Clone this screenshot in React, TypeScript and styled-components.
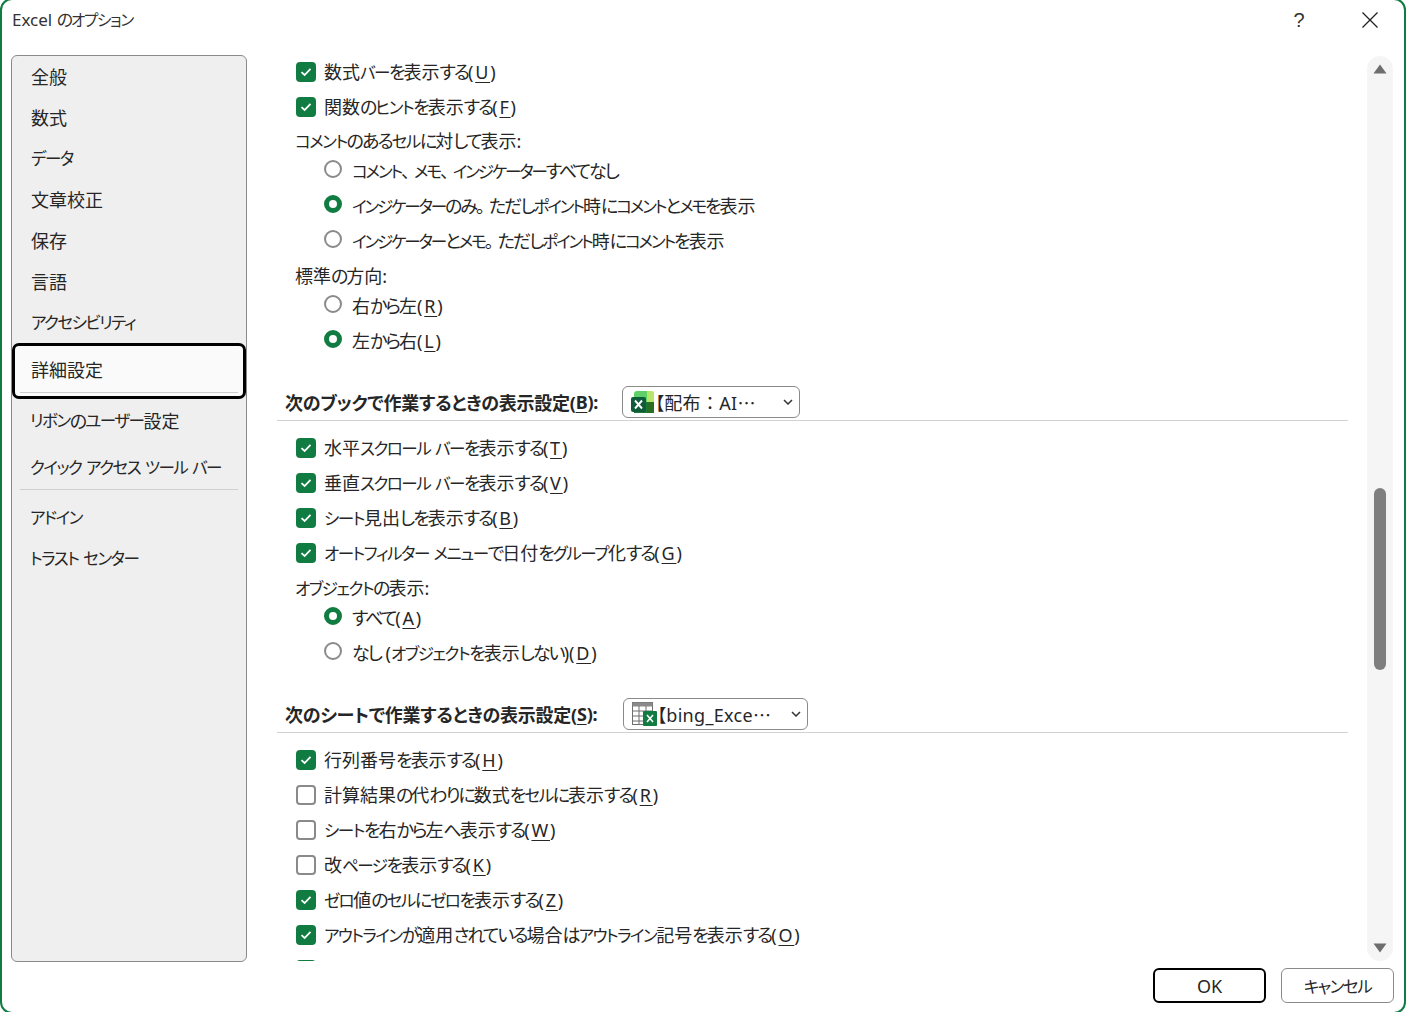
import styled, { createGlobalStyle } from "styled-components";
import { ReactNode } from "react";

const GlobalStyle = createGlobalStyle`
  html, body {
    margin: 0;
    padding: 0;
    height: 100%;
    overflow: hidden;
    background: #ffffff;
  }
  * {
    box-sizing: border-box;
  }
`;

const FONT = `"Noto Sans", "Noto Sans CJK JP", sans-serif`;

const Window = styled.div`
  width: 1406px;
  height: 1016px;
  margin-top: -2px;
  border: 2px solid #107c41;
  border-radius: 12px;
  background: #ffffff;
  display: flex;
  flex-direction: column;
  color: #262626;
  font-family: ${FONT};
  font-size: 18px;
  font-feature-settings: "palt";
  overflow: hidden;
`;

const TitleBar = styled.div`
  height: 55px;
  flex: none;
  display: flex;
  padding: 0 0 15px 10px;
  align-items: center;
`;

const Title = styled.div`
  flex: 1;
  font-size: 17px;
  margin-top: -4px;
  color: #333333;
`;

const HelpButton = styled.div`
  width: 70px;
  margin-left: 1px;
  text-align: center;
  font-family: "Liberation Sans", sans-serif;
  font-size: 20px;
  color: #333333;
`;

const CloseButton = styled.div`
  width: 70px;
  display: flex;
  justify-content: center;
  padding-left: 2px;
`;

const Body = styled.div`
  height: 907px;
  flex: none;
  display: flex;
  padding-left: 9px;
`;

const Sidebar = styled.nav`
  width: 236px;
  flex: none;
  background: #efefef;
  border: 1px solid #8a8a8a;
  border-radius: 6px;
  display: flex;
  flex-direction: column;
`;

const NavItem = styled.div<{ $h?: number; $x?: number; $low?: boolean }>`
  height: ${(p) => p.$h ?? 41}px;
  flex: none;
  display: flex;
  align-items: center;
  white-space: pre;
  padding-left: ${(p) => p.$x ?? 19}px;
  padding-top: ${(p) => (p.$low ? 3 : 0)}px;
  padding-bottom: ${(p) => (p.$low ? 0 : 2)}px;
`;

const NavSelected = styled.div`
  height: 56px;
  flex: none;
  background: #fafafa;
  border: 3px solid #000000;
  border-radius: 7px;
  padding: 0 5px 0 16px;
  display: flex;
  flex-direction: column;
`;

const NavSelectedText = styled.div`
  height: 46px;
  display: flex;
  align-items: center;
  flex: none;
`;

const NavRule = styled.div`
  height: 1px;
  flex: none;
  background: #d0d0d0;
  margin: 0 8px 7px;
`;

const NavSelectedRule = styled.div`
  height: 1px;
  background: #cccccc;
  margin-left: -11px;
  flex: none;
`;

const Content = styled.div`
  width: 1071px;
  height: 906px;
  flex: none;
  margin-left: 30px;
  overflow: hidden;
`;

const Row = styled.div<{ $radio?: boolean; $tight?: boolean }>`
  height: 35px;
  display: flex;
  align-items: center;
  white-space: pre;
  padding-left: ${(p) => (p.$radio ? 47 : 19)}px;
  --kata: ${(p) => (p.$tight ? "-0.13em" : "-0.09em")};
`;

const RowText = styled.span`
  margin-top: -4px;
`;

const RadioText = styled.span`
  margin-top: -2px;
`;

const GroupLabel = styled.div<{ $h: number }>`
  height: ${(p) => p.$h}px;
  display: flex;
  align-items: flex-end;
  padding-left: 18px;
  line-height: 23px;
`;

const CheckBox = styled.span<{ $on: boolean }>`
  width: 20px;
  height: 20px;
  flex: none;
  margin-right: 8px;
  margin-top: -2px;
  border-radius: 4px;
  background: ${(p) => (p.$on ? "#107c41" : "#ffffff")};
  border: ${(p) => (p.$on ? "none" : "2px solid #8a8a8a")};
  display: flex;
  align-items: center;
  justify-content: center;
`;

const RadioDot = styled.span<{ $on: boolean }>`
  width: 18px;
  height: 18px;
  flex: none;
  margin-right: 10px;
  margin-top: -3px;
  border-radius: 50%;
  background: #ffffff;
  border: ${(p) => (p.$on ? "5px solid #107c41" : "2px solid #8a8a8a")};
`;

const SectionHeader = styled.div`
  height: 35px;
  margin-top: 28px;
  margin-bottom: 10px;
  border-bottom: 1px solid #d2d2d2;
  display: flex;
  align-items: flex-start;
  padding-left: 8px;
`;

const SectionTitle = styled.div<{ $w: number }>`
  font-weight: 700;
  height: 32px;
  display: flex;
  align-items: center;
  letter-spacing: -0.25px;
  width: ${(p) => p.$w}px;
  flex: none;
`;

const Select = styled.div<{ $w: number }>`
  width: ${(p) => p.$w}px;
  height: 32px;
  border: 1px solid #8a8a8a;
  border-radius: 6px;
  display: flex;
  align-items: center;
  padding: 0 6px 0 8px;
`;

const SelectText = styled.span`
  flex: 1;
  white-space: nowrap;
  letter-spacing: 0.3px;
`;

const WideColon = styled.span`
  font-feature-settings: normal;
`;

const Dots = styled.span.attrs({ lang: "ja" })`
  font-family: "Noto Sans CJK JP", sans-serif;
  font-feature-settings: normal;
  letter-spacing: -1px;
`;

const Scrollbar = styled.div`
  width: 26px;
  height: 905px;
  margin-left: 19px;
  margin-top: 1px;
  flex: none;
  background: #f5f5f5;
  border-radius: 13px;
  display: flex;
  flex-direction: column;
  align-items: center;
`;

const ArrowSlot = styled.div`
  height: 26px;
  flex: none;
  display: flex;
  align-items: center;
  justify-content: center;
`;

const ThumbArea = styled.div`
  flex: 1;
  width: 100%;
  display: flex;
  justify-content: center;
  padding-top: 406px;
`;

const Thumb = styled.div`
  width: 12px;
  height: 182px;
  border-radius: 6px;
  background: #7f7f7f;
`;

const Footer = styled.div`
  height: 50px;
  flex: none;
  display: flex;
  justify-content: flex-end;
  gap: 15px;
  padding: 6px 10px 0 0;
`;

const Button = styled.div<{ $primary?: boolean }>`
  width: 113px;
  height: 35px;
  border-radius: 6px;
  border: ${(p) => (p.$primary ? "2px solid #000000" : "1px solid #8a8a8a")};
  display: flex;
  align-items: center;
  justify-content: center;
`;

const Key = styled.span`
  text-decoration: underline;
  text-underline-offset: 3px;
  text-decoration-thickness: 1px;
`;

const Parens = styled.span`
  letter-spacing: 1.8px;
`;

// the original font sets kana much tighter than kanji
const Kata = styled.span`
  font-size: 0.92em;
  letter-spacing: var(--kata, -0.09em);
`;

const Hira = styled.span`
  letter-spacing: -2px;
`;

const Punct = styled.span`
  font-feature-settings: normal;
  letter-spacing: -5px;
`;

const Jp = ({ text }: { text: string }) => (
  <>
    {(text.match(/[\u30A0-\u30FF]+|[\u3040-\u309F]+|[、。]+|[^\u30A0-\u30FF\u3040-\u309F、。]+/g) ?? []).map((run, i) => {
      if (/[\u30A0-\u30FF]/.test(run)) return <Kata key={i}>{run}</Kata>;
      if (/[\u3040-\u309F]/.test(run)) return <Hira key={i}>{run}</Hira>;
      if (/[、。]/.test(run)) return <Punct key={i}>{run}</Punct>;
      return <span key={i}>{run}</span>;
    })}
  </>
);

const Accel = ({ text, k }: { text: string; k?: string }): ReactNode => (
  <>
    <Jp text={text} />
    {k && (
      <Parens>
        (<Key>{k}</Key>)
      </Parens>
    )}
  </>
);

const Check = ({ on, text, k }: { on: boolean; text?: string; k?: string }) => (
  <Row>
    <CheckBox $on={on}>
      {on && (
        <svg width="12" height="10" viewBox="0 0 12 10" fill="none">
          <path d="M1.5 5.2 4.6 8 10.5 1.8" stroke="#fff" strokeWidth="1.8" />
        </svg>
      )}
    </CheckBox>
    {text && (
      <RowText>
        <Accel text={text} k={k} />
      </RowText>
    )}
  </Row>
);

const Radio = ({ on, text, k, tight }: { on: boolean; text: string; k?: string; tight?: boolean }) => (
  <Row $radio $tight={tight}>
    <RadioDot $on={on} />
    <RadioText>
      <Accel text={text} k={k} />
    </RadioText>
  </Row>
);

const BookIcon = () => (
  <svg width="24" height="24" viewBox="0 0 24 24" style={{ flex: "none" }}>
    <path d="M8 1h8v11H3V4a3 3 0 0 1 3-3z" fill="#5fd068" />
    <path d="M16 1h5a2 2 0 0 1 2 2v9h-7z" fill="#b5e66a" />
    <rect x="3" y="12" width="20" height="11" fill="#1e7a34" />
    <path d="M16 12h7v9a2 2 0 0 1-2 2h-5z" fill="#2a6e22" />
    <rect x="0" y="7" width="15" height="15" rx="2" fill="#0f5c3a" />
    <path d="M4 10.5l7 8M11 10.5l-7 8" stroke="#fff" strokeWidth="1.9" />
  </svg>
);

const SheetIcon = () => (
  <svg width="25" height="25" viewBox="0 0 25 25" style={{ flex: "none" }}>
    <rect x="0.5" y="0.5" width="20" height="22" fill="#fff" stroke="#6e6e6e" />
    <rect x="0.5" y="0.5" width="20" height="4" fill="#8a8a8a" />
    <path d="M0 9h21M0 14h21M0 19h21M7 4v19M14 4v19" stroke="#6e6e6e" />
    <rect x="11" y="9" width="14" height="15" rx="1" fill="#107c41" />
    <path d="M15 13l6 7M21 13l-6 7" stroke="#fff" strokeWidth="1.6" />
  </svg>
);

const Chevron = () => (
  <svg width="10" height="6" viewBox="0 0 10 6" fill="none" style={{ flex: "none" }}>
    <path d="M1 1l4 4 4-4" stroke="#333" strokeWidth="1.5" />
  </svg>
);

function App() {
  return (
    <>
      <GlobalStyle />
      <Window>
        <TitleBar>
          <Title><Jp text="Excel のオプション" /></Title>
          <HelpButton>?</HelpButton>
          <CloseButton>
            <svg width="16" height="16" viewBox="0 0 16 16" fill="none">
              <path d="M.5.5l15 15M15.5.5l-15 15" stroke="#222" strokeWidth="1.3" />
            </svg>
          </CloseButton>
        </TitleBar>
        <Body>
          <Sidebar>
            <NavItem><Jp text="全般" /></NavItem>
            <NavItem><Jp text="数式" /></NavItem>
            <NavItem><Jp text="データ" /></NavItem>
            <NavItem><Jp text="文章校正" /></NavItem>
            <NavItem><Jp text="保存" /></NavItem>
            <NavItem><Jp text="言語" /></NavItem>
            <NavItem><Jp text="アクセシビリティ" /></NavItem>
            <NavSelected>
              <NavSelectedText><Jp text="詳細設定" /></NavSelectedText>
              <NavSelectedRule />
            </NavSelected>
            <NavItem $h={43} $x={18}><Jp text="リボンのユーザー設定" /></NavItem>
            <NavItem $h={47} $x={18} $low><Jp text="クイック アクセス ツール バー" /></NavItem>
            <NavRule />
            <NavItem $x={18}><Jp text="アドイン" /></NavItem>
            <NavItem $x={18}><Jp text="トラスト センター" /></NavItem>
          </Sidebar>
          <Content>
            <Check on text="数式バーを表示する" k="U" />
            <Check on text="関数のヒントを表示する" k="F" />
            <GroupLabel $h={28}><Jp text="コメントのあるセルに対して表示:" /></GroupLabel>
            <Radio on={false} tight text="コメント、メモ、インジケーターすべてなし" />
            <Radio on tight text="インジケーターのみ。ただしポイント時にコメントとメモを表示" />
            <Radio on={false} tight text="インジケーターとメモ。ただしポイント時にコメントを表示" />
            <GroupLabel $h={30}><Jp text="標準の方向:" /></GroupLabel>
            <Radio on={false} text="右から左" k="R" />
            <Radio on text="左から右" k="L" />
            <SectionHeader>
              <SectionTitle $w={337}>次のブックで作業するときの表示設定(<Key>B</Key>):</SectionTitle>
              <Select $w={178}>
                <BookIcon />
                <SelectText>【配布<WideColon>：</WideColon>AI<Dots>…</Dots></SelectText>
                <Chevron />
              </Select>
            </SectionHeader>
            <Check on text="水平スクロール バーを表示する" k="T" />
            <Check on text="垂直スクロール バーを表示する" k="V" />
            <Check on text="シート見出しを表示する" k="B" />
            <Check on text="オートフィルター メニューで日付をグループ化する" k="G" />
            <GroupLabel $h={29}><Jp text="オブジェクトの表示:" /></GroupLabel>
            <Radio on text="すべて" k="A" />
            <Radio on={false} text="なし (オブジェクトを表示しない)" k="D" />
            <SectionHeader>
              <SectionTitle $w={338}>次のシートで作業するときの表示設定(<Key>S</Key>):</SectionTitle>
              <Select $w={185}>
                <SheetIcon />
                <SelectText>【bing_Exce<Dots>…</Dots></SelectText>
                <Chevron />
              </Select>
            </SectionHeader>
            <Check on text="行列番号を表示する" k="H" />
            <Check on={false} text="計算結果の代わりに数式をセルに表示する" k="R" />
            <Check on={false} text="シートを右から左へ表示する" k="W" />
            <Check on={false} text="改ページを表示する" k="K" />
            <Check on text="ゼロ値のセルにゼロを表示する" k="Z" />
            <Check on text="アウトラインが適用されている場合はアウトライン記号を表示する" k="O" />
            <Check on />
          </Content>
          <Scrollbar>
            <ArrowSlot>
              <svg width="14" height="10" viewBox="0 0 14 10">
                <path d="M7 .5 13.5 9.5H.5z" fill="#6e6e6e" />
              </svg>
            </ArrowSlot>
            <ThumbArea>
              <Thumb />
            </ThumbArea>
            <ArrowSlot>
              <svg width="14" height="10" viewBox="0 0 14 10">
                <path d="M7 9.5 13.5 .5H.5z" fill="#6e6e6e" />
              </svg>
            </ArrowSlot>
          </Scrollbar>
        </Body>
        <Footer>
          <Button $primary>OK</Button>
          <Button><Jp text="キャンセル" /></Button>
        </Footer>
      </Window>
    </>
  );
}

export default App;
